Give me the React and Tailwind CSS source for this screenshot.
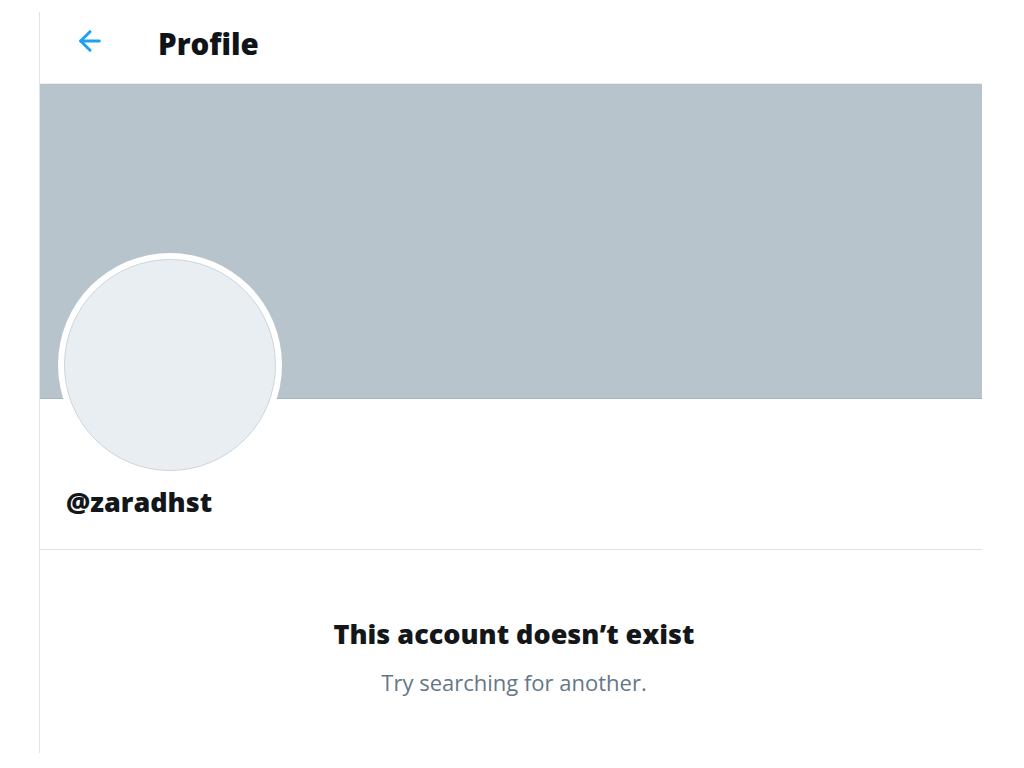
import { ArrowLeft } from "lucide-react";

export default function App() {
  return (
    <div
      className="w-[1024px] h-[768px] bg-white overflow-hidden"
      style={{ fontFamily: '"Open Sans", "Noto Sans", sans-serif' }}
    >
      <div className="ml-[39px] mt-[12px] w-[943px] h-[741px] border-l border-[#dfe6ea] flex flex-col">
        {/* Header */}
        <div className="h-[72px] flex items-center shrink-0 border-b border-[#e6ecf0]">
          <div className="w-[118px] pl-[34px] flex items-center -mt-[13px]">
            <ArrowLeft className="w-[32px] h-[32px] text-[#1da1f2]" strokeWidth={2.2} />
          </div>
          <h1 className="text-[29.5px] font-extrabold text-[#0f1419] leading-none -mt-[8px]">Profile</h1>
        </div>

        {/* Banner */}
        <div className="h-[315px] bg-[#b8c4cc] border-b border-[#aab6be] shrink-0" />

        {/* Avatar + name */}
        <div className="relative h-[151px] shrink-0 border-b border-[#dde3e8]">
          <div className="absolute left-[18px] -top-[146px] w-[224px] h-[224px] rounded-full bg-white p-[6px]">
            <div className="w-full h-full rounded-full bg-[#e9eef2] border border-[#ccd5dc]" />
          </div>
          <div className="absolute left-[26px] top-[89px] text-[27px] font-extrabold text-[#14171a] leading-none">
            @zaradhst
          </div>
        </div>

        {/* Empty state */}
        <div className="flex flex-col items-center pt-[70px] pl-[6px]">
          <h2 className="text-[27px] font-extrabold text-[#14171a] leading-none">
            This account doesn’t exist
          </h2>
          <p className="mt-[24px] text-[22px] text-[#657786] leading-none">
            Try searching for another.
          </p>
        </div>
      </div>
    </div>
  );
}
